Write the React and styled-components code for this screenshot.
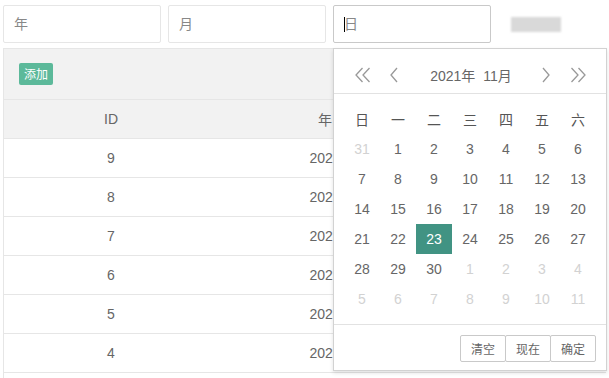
import React from "react";
import styled, { createGlobalStyle } from "styled-components";

const GlobalStyle = createGlobalStyle`
  html, body {
    margin: 0;
    padding: 0;
    background: #fff;
    font-family: "Liberation Sans", Arial, "Noto Sans CJK SC", sans-serif;
    color: #666;
    font-size: 14px;
  }
`;

const weekDays = ["日", "一", "二", "三", "四", "五", "六"];

// 6 rows of the November 2021 month view, starting at Oct 31
const buildDays = () => {
  const days = [{ n: 31, muted: true }];
  for (let i = 1; i <= 30; i++) days.push({ n: i, muted: false });
  for (let i = 1; days.length < 42; i++) days.push({ n: i, muted: true });
  return days;
};

const rows = [9, 8, 7, 6, 5, 4];

const App = () => {
  const days = buildDays();
  return (
    <>
      <GlobalStyle />
      <Page>
        <SearchBar>
          <Field placeholder="年" />
          <Field placeholder="月" />
          <FieldWrap>
            <Field placeholder="日" $focused />
            <Caret />
          </FieldWrap>
          <Blurred>
            <BlurBlock />
          </Blurred>
        </SearchBar>

        <TableBox>
          <Toolbar>
            <AddBtn>添加</AddBtn>
          </Toolbar>
          <HeadRow>
            <Cell>ID</Cell>
            <Cell>年</Cell>
            <Cell>月</Cell>
          </HeadRow>
          {rows.map((id) => (
            <BodyRow key={id}>
              <Cell>{id}</Cell>
              <Cell>2021</Cell>
              <Cell>11</Cell>
            </BodyRow>
          ))}
          <EmptyRow />
        </TableBox>

        <DatePicker>
          <PickerHeader>
            <NavIcon $left={20}>
              <svg width="18" height="16" viewBox="0 0 18 16">
                <path d="M8.5 1 L2 8 L8.5 15 M15.5 1 L9 8 L15.5 15" fill="none" stroke="#999" strokeWidth="1.3" />
              </svg>
            </NavIcon>
            <NavIcon $left={55}>
              <svg width="10" height="16" viewBox="0 0 10 16">
                <path d="M8 1 L2 8 L8 15" fill="none" stroke="#999" strokeWidth="1.3" />
              </svg>
            </NavIcon>
            <Title>
              <span>2021年</span>
              <span>11月</span>
            </Title>
            <NavIcon $right={55}>
              <svg width="10" height="16" viewBox="0 0 10 16">
                <path d="M2 1 L8 8 L2 15" fill="none" stroke="#999" strokeWidth="1.3" />
              </svg>
            </NavIcon>
            <NavIcon $right={19}>
              <svg width="18" height="16" viewBox="0 0 18 16">
                <path d="M2.5 1 L9 8 L2.5 15 M9.5 1 L16 8 L9.5 15" fill="none" stroke="#999" strokeWidth="1.3" />
              </svg>
            </NavIcon>
          </PickerHeader>
          <PickerBody>
            {weekDays.map((w) => (
              <WeekCell key={w}>{w}</WeekCell>
            ))}
            {days.map((d, i) => (
              <DayCell key={i} $muted={d.muted} $active={!d.muted && d.n === 23}>
                {d.n}
              </DayCell>
            ))}
          </PickerBody>
          <PickerFooter>
            <FootBtns>
              <FootBtn>清空</FootBtn>
              <FootBtn>现在</FootBtn>
              <FootBtn>确定</FootBtn>
            </FootBtns>
          </PickerFooter>
        </DatePicker>
      </Page>
    </>
  );
};

export default App;

const Page = styled.div`
  position: relative;
  width: 609px;
  height: 378px;
  overflow: hidden;
  padding: 5px 3px 0;
  box-sizing: border-box;
`;

const SearchBar = styled.div`
  display: flex;
  align-items: center;
  gap: 7px;
  height: 38px;
`;

const FieldWrap = styled.div`
  position: relative;
  display: flex;
`;

const Field = styled.input`
  width: 158px;
  height: 38px;
  box-sizing: border-box;
  border: 1px solid ${(p) => (p.$focused ? "#c9c9c9" : "#e6e6e6")};
  border-radius: 2px;
  padding: 0 10px;
  font-family: "Liberation Sans", Arial, "Noto Sans CJK SC", sans-serif;
  font-size: 14px;
  color: #666;
  outline: none;
  &::placeholder {
    color: #888;
  }
`;

const Caret = styled.span`
  position: absolute;
  left: 11px;
  top: 12px;
  width: 1px;
  height: 15px;
  background: #000;
`;

const Blurred = styled.div`
  margin-left: 8px;
  width: 110px;
  height: 38px;
  display: flex;
  align-items: center;
  padding-left: 5px;
  box-sizing: border-box;
  filter: blur(1px);
`;

const BlurBlock = styled.div`
  width: 50px;
  height: 15px;
  background: #d9d9d9;
`;

const TableBox = styled.div`
  margin-top: 5px;
  border: 1px solid #e6e6e6;
  border-right: none;
`;

const Toolbar = styled.div`
  height: 51px;
  background: #f2f2f2;
  border-bottom: 1px solid #e6e6e6;
  display: flex;
  align-items: center;
  padding: 0 15px;
  box-sizing: border-box;
`;

const AddBtn = styled.span`
  display: inline-flex;
  align-items: center;
  justify-content: center;
  height: 22px;
  padding: 0 5px;
  border-radius: 2px;
  background: #5cb99a;
  color: #fff;
  font-size: 12px;
  font-family: "Noto Sans CJK SC", sans-serif;
  margin-top: -1px;
`;

const HeadRow = styled.div`
  display: grid;
  grid-template-columns: 214px 214px 1fr;
  height: 38px;
  background: #f2f2f2;
  border-bottom: 1px solid #e6e6e6;
`;

const BodyRow = styled(HeadRow)`
  background: #fff;
`;

const EmptyRow = styled.div`
  height: 38px;
`;

const Cell = styled.div`
  display: flex;
  align-items: center;
  justify-content: center;
  font-size: 14px;
  color: #666;
  font-family: "Liberation Sans", Arial, "Noto Sans CJK SC", sans-serif;
`;

const DatePicker = styled.div`
  position: absolute;
  left: 333px;
  top: 48px;
  width: 272px;
  background: #fff;
  border: 1px solid #d2d2d2;
  box-shadow: 0 2px 4px rgba(0, 0, 0, 0.12);
`;

const PickerHeader = styled.div`
  position: relative;
  height: 45px;
  padding: 10px 0 5px;
  box-sizing: border-box;
  border-bottom: 1px solid #e2e2e2;
  display: flex;
  justify-content: center;
  align-items: center;
`;

const NavIcon = styled.span`
  position: absolute;
  top: 11px;
  ${(p) => (p.$left !== undefined ? `left: ${p.$left}px;` : `right: ${p.$right}px;`)}
  display: flex;
  align-items: center;
  height: 30px;
`;

const Title = styled.div`
  display: flex;
  gap: 8px;
  font-size: 14px;
  color: #666;
  margin-left: 2px;
  margin-top: 2px;
  font-family: "Liberation Sans", Arial, "Noto Sans CJK SC", sans-serif;
`;

const PickerBody = styled.div`
  display: grid;
  grid-template-columns: repeat(7, 36px);
  grid-auto-rows: 30px;
  padding: 10px;
`;

const WeekCell = styled.div`
  display: flex;
  align-items: center;
  justify-content: center;
  color: #555;
  font-size: 14px;
  font-family: "Noto Sans CJK SC", sans-serif;
`;

const DayCell = styled.div`
  display: flex;
  align-items: center;
  justify-content: center;
  font-size: 14px;
  color: ${(p) => (p.$active ? "#fff" : p.$muted ? "#d2d2d2" : "#666")};
  background: ${(p) => (p.$active ? "#419383" : "transparent")};
`;

const PickerFooter = styled.div`
  height: 46px;
  border-top: 1px solid #e2e2e2;
  padding: 10px;
  box-sizing: border-box;
  display: flex;
  justify-content: flex-end;
`;

const FootBtns = styled.div`
  display: flex;
  align-items: flex-start;
`;

const FootBtn = styled.span`
  display: inline-flex;
  align-items: center;
  height: 25px;
  padding: 0 10px;
  border: 1px solid #c9c9c9;
  border-radius: 2px;
  margin-left: -1px;
  font-size: 12px;
  color: #666;
  font-family: "Noto Sans CJK SC", sans-serif;
  background: #fff;
`;
